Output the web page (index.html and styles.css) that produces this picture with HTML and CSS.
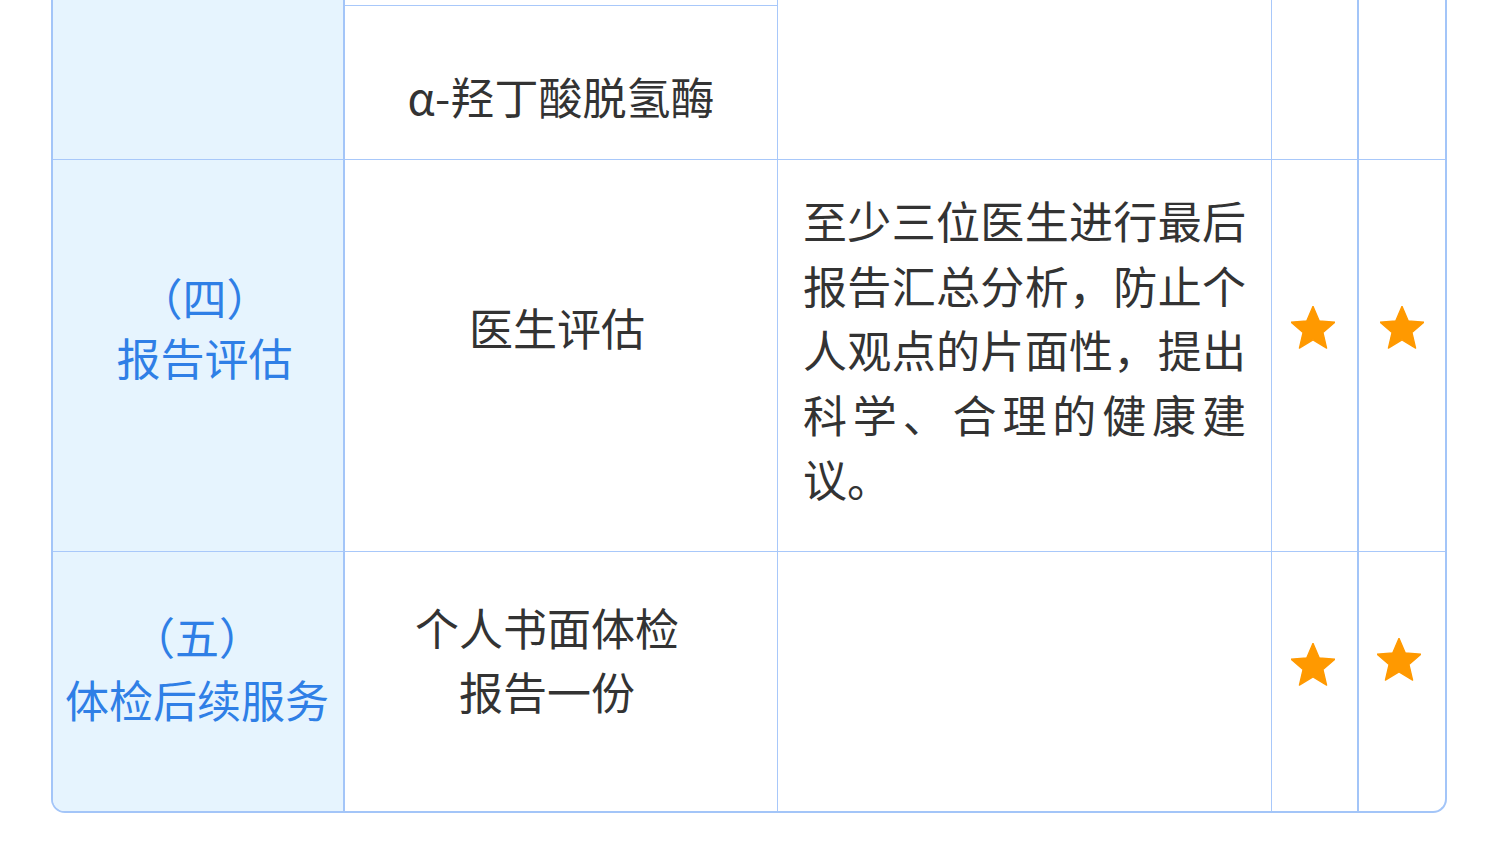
FILE: index.html
```html
<!DOCTYPE html>
<html lang="zh-CN">
<head>
<meta charset="utf-8">
<title>体检项目</title>
<link rel="stylesheet" href="styles.css">
</head>
<body>
<div class="table">
  <!-- row 1 (continued from above) -->
  <div class="cell c1 rb"></div>
  <div class="cell c2 rb stack">
    <div class="sub sub-top"></div>
    <div class="sub sub-alpha">α-羟丁酸脱氢酶</div>
  </div>
  <div class="cell c3 rb"></div>
  <div class="cell c4 rb"></div>
  <div class="cell c5 rb"></div>

  <!-- row 4 -->
  <div class="cell c1 rb r4 head r4-head">（四）<br>报告评估</div>
  <div class="cell c2 rb r4 name r4-name">医生评估</div>
  <div class="cell c3 rb desc">至少三位医生进行最后报告汇总分析，防止个人观点的片面性，提出科学、合理的健康建议。</div>
  <div class="cell c4 rb r4 mark">
    <svg class="star" viewBox="2 2 20 19.3" aria-hidden="true"><path d="M12 17.27L18.18 21l-1.64-7.03L22 9.24l-7.19-.61L12 2 9.19 8.63 2 9.24l5.46 4.73L5.82 21z"/></svg>
  </div>
  <div class="cell c5 rb r4 mark">
    <svg class="star" viewBox="2 2 20 19.3" aria-hidden="true"><path d="M12 17.27L18.18 21l-1.64-7.03L22 9.24l-7.19-.61L12 2 9.19 8.63 2 9.24l5.46 4.73L5.82 21z"/></svg>
  </div>

  <!-- row 5 -->
  <div class="cell c1 r5 head r5-head">（五）<br>体检后续服务</div>
  <div class="cell c2 r5 name r5-name">个人书面体检<br>报告一份</div>
  <div class="cell c3 r5"></div>
  <div class="cell c4 r5 mark r5-mark4">
    <svg class="star" viewBox="2 2 20 19.3" aria-hidden="true"><path d="M12 17.27L18.18 21l-1.64-7.03L22 9.24l-7.19-.61L12 2 9.19 8.63 2 9.24l5.46 4.73L5.82 21z"/></svg>
  </div>
  <div class="cell c5 r5 mark r5-mark5">
    <svg class="star" viewBox="2 2 20 19.3" aria-hidden="true"><path d="M12 17.27L18.18 21l-1.64-7.03L22 9.24l-7.19-.61L12 2 9.19 8.63 2 9.24l5.46 4.73L5.82 21z"/></svg>
  </div>
</div>
</body>
</html>
```
FILE: styles.css
```css
html, body {
  margin: 0;
  padding: 0;
  background: #ffffff;
  overflow: hidden;
}

body {
  font-family: "Noto Sans CJK SC", "Noto Sans", sans-serif;
  color: #333333;
}

.table {
  margin: -100px 0 0 51px;
  width: 1396px;
  box-sizing: border-box;
  border: 2px solid #a3c5f8;
  border-top: none;
  border-radius: 0 0 14px 14px;
  overflow: hidden;
  display: grid;
  grid-template-columns: 292px 433px 494px 87px 1fr;
}

.cell {
  box-sizing: border-box;
  font-size: 44px;
  line-height: 62px;
}

.rb {
  border-bottom: 1px solid #a8c8fa;
}

.c1 {
  background: #e6f4fe;
  border-right: 2px solid #a3c5f8;
}

.c2,
.c3 {
  border-right: 1px solid #a8c8fa;
}

.c4 {
  border-right: 2px solid #a3c5f8;
}

/* row 1 */
.stack {
  display: flex;
  flex-direction: column;
}

.sub-top {
  height: 105px;
  border-bottom: 1px solid #a8c8fa;
}

.sub-alpha {
  height: 153px;
  padding-top: 59px;
  box-sizing: border-box;
  text-align: center;
  line-height: 62px;
}

/* generic centred cells */
.head,
.name,
.mark {
  display: flex;
  align-items: center;
  justify-content: center;
  text-align: center;
}

.head {
  color: #2f7fe6;
  line-height: 60px;
}

.r4 {
  padding-bottom: 56px;
}

.r4-head {
  padding-left: 13px;
}

.r4-name {
  padding-right: 8px;
}

.desc {
  padding: 28px 25px 40px 25px;
  line-height: 64.5px;
  text-align: justify;
}

.star {
  width: 44px;
  height: 43px;
  fill: #ff9900;
  stroke: #ff9900;
  stroke-width: 0.6;
  stroke-linejoin: round;
}

.c4.mark {
  padding-right: 4px;
}

/* row 5 */
.r5 {
  height: 259px;
}

.r5-head {
  padding: 0 2px 26px 0;
  line-height: 63px;
}

.r5-name {
  padding: 0 28px 44px 0;
  line-height: 64px;
}

.r5-mark4 {
  padding-bottom: 34px;
}

.r5-mark5 {
  padding-bottom: 44px;
  padding-right: 6px;
}
```
